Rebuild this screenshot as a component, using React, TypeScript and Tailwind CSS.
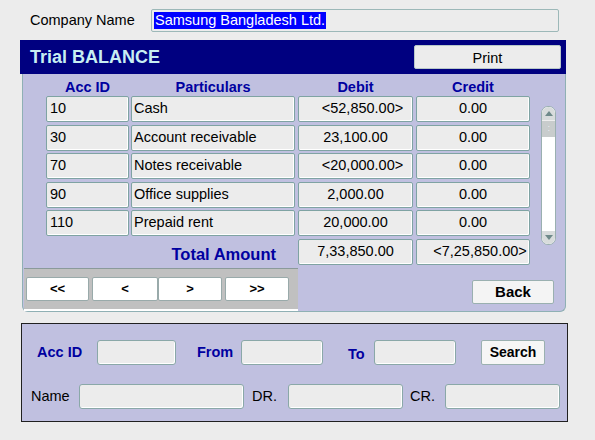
import React from 'react';

const rows = [
  { id: '10', name: 'Cash', debit: '<52,850.00>', credit: '0.00' },
  { id: '30', name: 'Account receivable', debit: '23,100.00', credit: '0.00' },
  { id: '70', name: 'Notes receivable', debit: '<20,000.00>', credit: '0.00' },
  { id: '90', name: 'Office supplies', debit: '2,000.00', credit: '0.00' },
  { id: '110', name: 'Prepaid rent', debit: '20,000.00', credit: '0.00' },
];

const cell =
  'h-[26px] bg-[#ececec] border border-[#7fa3a3] rounded-[2px] flex items-center text-[14.5px] text-black shadow-[inset_-1px_-1px_0_#ffffff]';
const field =
  'h-[25px] bg-[#ececec] border border-[#8aa8a8] rounded-[3px] shadow-[inset_-1px_-1px_0_#ffffff]';

function Amount({ value, width }: { value: string; width: string }) {
  const neg = value.startsWith('<');
  return (
    <div className={`${cell} ${width} justify-center ${neg ? 'pl-[14px]' : ''}`}>{value}</div>
  );
}

function ScrollBar() {
  return (
    <div className="w-[15px] h-[139px] mt-[10px] ml-[11px] bg-white border border-[#9ab0b0] rounded-[7px] flex flex-col justify-between overflow-hidden">
      <div className="flex flex-col">
        <div className="h-[13px] bg-[#d8dcdc] rounded-t-[6px] flex items-center justify-center">
          <div className="w-0 h-0 border-l-[4px] border-r-[4px] border-b-[5px] border-l-transparent border-r-transparent border-b-[#6f8a8a]" />
        </div>
        <div className="h-[17px] bg-[#c8cccc] border-t border-[#eeeeee] flex items-center justify-center text-[7px] text-white">
          ⁚
        </div>
      </div>
      <div className="h-[13px] bg-[#d8dcdc] rounded-b-[6px] flex items-center justify-center">
        <div className="w-0 h-0 border-l-[4px] border-r-[4px] border-t-[5px] border-l-transparent border-r-transparent border-t-[#6f8a8a]" />
      </div>
    </div>
  );
}

function NavButton({ label, width }: { label: string; width: string }) {
  return (
    <button className={`${width} h-[24px] bg-white border border-[#9aa] rounded-[2px] text-[13px] font-bold text-black flex items-center justify-center`}>
      {label}
    </button>
  );
}

export default function App() {
  return (
    <div
      className="w-[595px] h-[440px] bg-[#ececec] overflow-hidden"
      style={{ fontFamily: '"Liberation Sans", Arial, sans-serif' }}
    >
      {/* company */}
      <div className="flex items-center pt-[9px]">
        <span className="ml-[30px] w-[121px] text-[14.5px] text-black">Company Name</span>
        <div className="w-[408px] h-[23px] bg-[#ececec] border border-[#9cb8b8] rounded-[2px] flex items-center pl-[2px]">
          <span className="bg-[#0000ff] text-white text-[14.5px] leading-[17px] px-[1px]">Samsung Bangladesh Ltd.</span>
        </div>
      </div>

      {/* trial balance panel */}
      <div className="ml-[20px] mt-[8px] w-[546px]">
        <div className="h-[34px] bg-[#000080] flex items-center justify-between">
          <span className="pl-[10px] text-[18px] font-bold text-[#c8eef2]">Trial BALANCE</span>
          <button className="mr-[5px] w-[147px] h-[24px] pt-[2px] bg-[#ececec] border border-[#b8c8c8] rounded-[2px] text-[14.5px] text-black">
            Print
          </button>
        </div>
        <div className="ml-[2px] h-[238px] bg-[#c0c0e0] border-l border-r border-b border-[#8fb0b4] rounded-b-[6px] flex flex-col">
          <div className="flex pl-[23px] h-[22px] items-end text-[14.5px] leading-[15px] font-bold text-[#0000a0]">
            <div className="w-[83px] text-center">Acc ID</div>
            <div className="w-[164px] ml-[2px] text-center">Particulars</div>
            <div className="w-[115px] ml-[3px] text-center">Debit</div>
            <div className="w-[114px] ml-[3px] text-center">Credit</div>
          </div>
          <div className="flex mt-[1px]">
            <div className="flex flex-col gap-[2.5px] pl-[23px]">
              {rows.map((r) => (
                <div key={r.id} className="flex">
                  <div className={`${cell} w-[83px] pl-[3px]`}>{r.id}</div>
                  <div className={`${cell} w-[164px] ml-[2px] pl-[2px]`}>{r.name}</div>
                  <div className="ml-[3px]">
                    <Amount value={r.debit} width="w-[115px]" />
                  </div>
                  <div className="ml-[3px]">
                    <Amount value={r.credit} width="w-[114px]" />
                  </div>
                </div>
              ))}
              <div className="flex mt-[0.5px]">
                <div className="w-[249px] flex items-center justify-end pr-[19px] pt-[3px] text-[16.5px] font-bold text-[#0000a0]">
                  Total Amount
                </div>
                <div className="ml-[3px]">
                  <Amount value="7,33,850.00" width="w-[115px]" />
                </div>
                <div className="ml-[3px]">
                  <Amount value="<7,25,850.00>" width="w-[114px]" />
                </div>
              </div>
            </div>
            <ScrollBar />
          </div>
          <div className="flex mt-[1px]">
            <div className="ml-[1px] w-[274px] h-[43px] bg-[#c0c0c0] border-t border-[#8a9a9a] border-b-2 border-b-white flex items-center pl-[2px] gap-[3px]">
              <NavButton label="<<" width="w-[63px]" />
              <div className="flex">
                <NavButton label="<" width="w-[66px]" />
                <NavButton label=">" width="w-[64px]" />
              </div>
              <NavButton label=">>" width="w-[64px]" />
            </div>
            <button className="ml-[174px] mt-[12px] w-[82px] h-[24px] bg-[#f4f4f4] border border-[#9ab0b0] rounded-[2px] text-[15px] font-bold text-black">
              Back
            </button>
          </div>
        </div>
      </div>

      {/* search panel */}
      <div className="ml-[21px] mt-[11px] w-[547px] h-[99px] bg-[#c0c0e0] border border-[#202020] flex flex-col">
        <div className="flex items-center mt-[16px] text-[14.5px] font-bold text-[#0000a0]">
          <span className="ml-[15px] w-[60px]">Acc ID</span>
          <div className={`${field} w-[79px]`} />
          <span className="ml-[21px] w-[44px]">From</span>
          <div className={`${field} w-[82px]`} />
          <span className="ml-[25px] w-[26px] mt-[4px]">To</span>
          <div className={`${field} w-[82px]`} />
          <button className="ml-[25px] w-[64px] h-[25px] bg-[#f6f6f6] border border-[#9ab0b0] rounded-[2px] text-[14px] font-bold text-black">
            Search
          </button>
        </div>
        <div className="flex items-center mt-[18px] text-[14.5px] text-black">
          <span className="ml-[9px] w-[48px] pt-[2px]">Name</span>
          <div className={`${field} w-[165px]`} />
          <span className="ml-[8px] w-[36px] pt-[2px]">DR.</span>
          <div className={`${field} w-[115px]`} />
          <span className="ml-[7px] w-[35px] pt-[2px]">CR.</span>
          <div className={`${field} w-[115px]`} />
        </div>
      </div>
    </div>
  );
}
